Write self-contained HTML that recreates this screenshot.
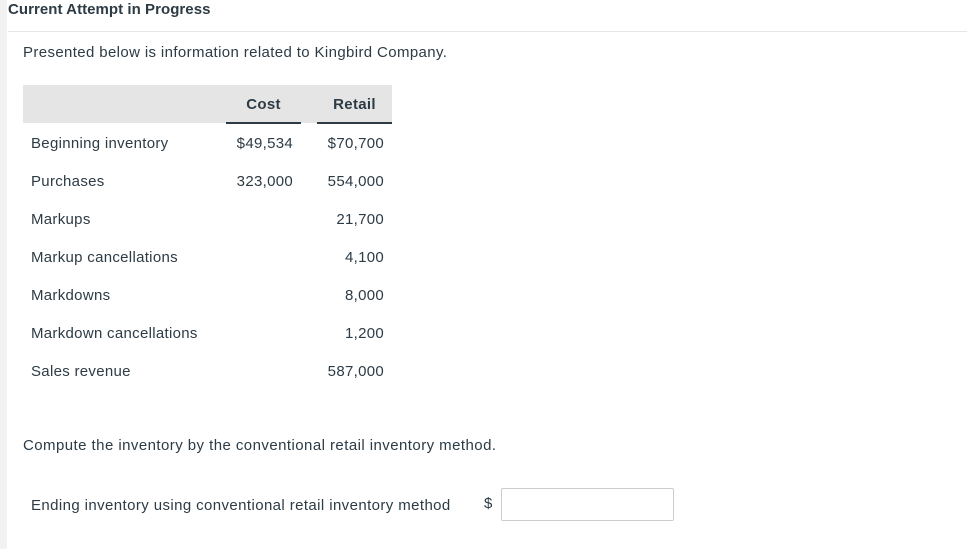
<!DOCTYPE html>
<html><head><style>
body{margin:0;width:967px;height:549px;background:#fff;font-family:"Liberation Sans",sans-serif;color:#2d3b45;position:relative;overflow:hidden}
.strip{position:absolute;left:0;top:0;width:7px;height:549px;background:#f2f2f2}
.t{position:absolute;white-space:nowrap;font-size:15px;line-height:18px;letter-spacing:0.3px}
.r{text-align:right}
</style></head><body>
<div class="strip"></div>
<div class="t" style="left:8px;top:1px;font-weight:bold;font-size:15px;letter-spacing:0.05px">Current Attempt in Progress</div>
<div style="position:absolute;left:8px;right:0;top:31px;height:1px;background:#e6e6e6"></div>
<div class="t" style="left:23px;top:44px;letter-spacing:0.37px">Presented below is information related to Kingbird Company.</div>
<div style="position:absolute;left:23px;top:85px;width:369px;height:38px;background:#e5e5e5"></div>
<div style="position:absolute;left:226px;top:122px;width:75px;height:2px;background:#2d3b45"></div>
<div style="position:absolute;left:317px;top:122px;width:75px;height:2px;background:#2d3b45"></div>
<div class="t" style="left:226px;width:75px;text-align:center;top:96px;font-weight:bold">Cost</div>
<div class="t" style="left:317px;width:75px;text-align:center;top:96px;font-weight:bold">Retail</div>
<div class="t" style="left:31px;top:135px">Beginning inventory</div>
<div class="t r" style="left:200px;width:93px;top:135px">$49,534</div>
<div class="t r" style="left:300px;width:84px;top:135px">$70,700</div>
<div class="t" style="left:31px;top:173px">Purchases</div>
<div class="t r" style="left:200px;width:93px;top:173px">323,000</div>
<div class="t r" style="left:300px;width:84px;top:173px">554,000</div>
<div class="t" style="left:31px;top:211px">Markups</div>
<div class="t r" style="left:300px;width:84px;top:211px">21,700</div>
<div class="t" style="left:31px;top:249px">Markup cancellations</div>
<div class="t r" style="left:300px;width:84px;top:249px">4,100</div>
<div class="t" style="left:31px;top:287px">Markdowns</div>
<div class="t r" style="left:300px;width:84px;top:287px">8,000</div>
<div class="t" style="left:31px;top:325px">Markdown cancellations</div>
<div class="t r" style="left:300px;width:84px;top:325px">1,200</div>
<div class="t" style="left:31px;top:363px">Sales revenue</div>
<div class="t r" style="left:300px;width:84px;top:363px">587,000</div>
<div class="t" style="left:23px;top:437px;letter-spacing:0.44px">Compute the inventory by the conventional retail inventory method.</div>
<div class="t" style="left:31px;top:497px;letter-spacing:0.4px">Ending inventory using conventional retail inventory method</div>
<div class="t" style="left:484px;top:495px">$</div>
<div style="position:absolute;left:501px;top:488px;width:171px;height:31px;border:1px solid #ccc;border-radius:2px"></div>
</body></html>
